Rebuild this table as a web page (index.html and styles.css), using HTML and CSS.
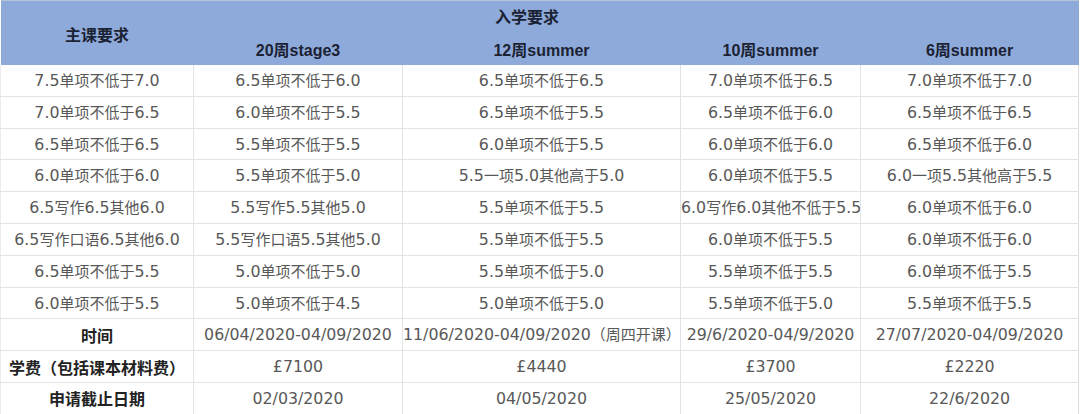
FILE: index.html
```html
<!DOCTYPE html>
<html lang="zh">
<head>
<meta charset="utf-8">
<title>入学要求</title>
<link rel="stylesheet" href="styles.css">
</head>
<body>
<table class="req">
  <colgroup>
    <col class="c1"><col class="c2"><col class="c3"><col class="c4"><col class="c5">
  </colgroup>
  <thead>
    <tr class="h1">
      <th rowspan="2" class="main">主课要求</th>
      <th colspan="3" class="top">入学要求</th>
      <th class="top"></th>
    </tr>
    <tr class="h2">
      <th>20周stage3</th>
      <th>12周summer</th>
      <th>10周summer</th>
      <th>6周summer</th>
    </tr>
  </thead>
  <tbody>
    <tr>
      <td><span class="n">7.5</span>单项不低于<span class="n">7.0</span></td>
      <td><span class="n">6.5</span>单项不低于<span class="n">6.0</span></td>
      <td><span class="n">6.5</span>单项不低于<span class="n">6.5</span></td>
      <td><span class="n">7.0</span>单项不低于<span class="n">6.5</span></td>
      <td><span class="n">7.0</span>单项不低于<span class="n">7.0</span></td>
    </tr>
    <tr>
      <td><span class="n">7.0</span>单项不低于<span class="n">6.5</span></td>
      <td><span class="n">6.0</span>单项不低于<span class="n">5.5</span></td>
      <td><span class="n">6.5</span>单项不低于<span class="n">5.5</span></td>
      <td><span class="n">6.5</span>单项不低于<span class="n">6.0</span></td>
      <td><span class="n">6.5</span>单项不低于<span class="n">6.5</span></td>
    </tr>
    <tr>
      <td><span class="n">6.5</span>单项不低于<span class="n">6.5</span></td>
      <td><span class="n">5.5</span>单项不低于<span class="n">5.5</span></td>
      <td><span class="n">6.0</span>单项不低于<span class="n">5.5</span></td>
      <td><span class="n">6.0</span>单项不低于<span class="n">6.0</span></td>
      <td><span class="n">6.5</span>单项不低于<span class="n">6.0</span></td>
    </tr>
    <tr>
      <td><span class="n">6.0</span>单项不低于<span class="n">6.0</span></td>
      <td><span class="n">5.5</span>单项不低于<span class="n">5.0</span></td>
      <td><span class="n">5.5</span>一项<span class="n">5.0</span>其他高于<span class="n">5.0</span></td>
      <td><span class="n">6.0</span>单项不低于<span class="n">5.5</span></td>
      <td><span class="n">6.0</span>一项<span class="n">5.5</span>其他高于<span class="n">5.5</span></td>
    </tr>
    <tr>
      <td><span class="n">6.5</span>写作<span class="n">6.5</span>其他<span class="n">6.0</span></td>
      <td><span class="n">5.5</span>写作<span class="n">5.5</span>其他<span class="n">5.0</span></td>
      <td><span class="n">5.5</span>单项不低于<span class="n">5.5</span></td>
      <td class="tight"><span class="n">6.0</span>写作<span class="n">6.0</span>其他不低于<span class="n">5.5</span></td>
      <td><span class="n">6.0</span>单项不低于<span class="n">6.0</span></td>
    </tr>
    <tr>
      <td><span class="n">6.5</span>写作口语<span class="n">6.5</span>其他<span class="n">6.0</span></td>
      <td><span class="n">5.5</span>写作口语<span class="n">5.5</span>其他<span class="n">5.0</span></td>
      <td><span class="n">5.5</span>单项不低于<span class="n">5.5</span></td>
      <td><span class="n">6.0</span>单项不低于<span class="n">5.5</span></td>
      <td><span class="n">6.0</span>单项不低于<span class="n">6.0</span></td>
    </tr>
    <tr>
      <td><span class="n">6.5</span>单项不低于<span class="n">5.5</span></td>
      <td><span class="n">5.0</span>单项不低于<span class="n">5.0</span></td>
      <td><span class="n">5.5</span>单项不低于<span class="n">5.0</span></td>
      <td><span class="n">5.5</span>单项不低于<span class="n">5.5</span></td>
      <td><span class="n">6.0</span>单项不低于<span class="n">5.5</span></td>
    </tr>
    <tr>
      <td><span class="n">6.0</span>单项不低于<span class="n">5.5</span></td>
      <td><span class="n">5.0</span>单项不低于<span class="n">4.5</span></td>
      <td><span class="n">5.0</span>单项不低于<span class="n">5.0</span></td>
      <td><span class="n">5.5</span>单项不低于<span class="n">5.0</span></td>
      <td><span class="n">5.5</span>单项不低于<span class="n">5.5</span></td>
    </tr>
    <tr>
      <td class="label">时间</td>
      <td><span class="n">06/04/2020-04/09/2020</span></td>
      <td><span class="n">11/06/2020-04/09/2020</span>（周四开课）</td>
      <td><span class="n">29/6/2020-04/9/2020</span></td>
      <td><span class="n">27/07/2020-04/09/2020</span></td>
    </tr>
    <tr>
      <td class="label">学费（包括课本材料费）</td>
      <td><span class="n">£7100</span></td>
      <td><span class="n">£4440</span></td>
      <td><span class="n">£3700</span></td>
      <td><span class="n">£2220</span></td>
    </tr>
    <tr>
      <td class="label">申请截止日期</td>
      <td><span class="n">02/03/2020</span></td>
      <td><span class="n">04/05/2020</span></td>
      <td><span class="n">25/05/2020</span></td>
      <td><span class="n">22/6/2020</span></td>
    </tr>
  </tbody>
</table>
</body>
</html>
```
FILE: styles.css
```css
html, body {
  margin: 0;
  padding: 0;
  background: #ffffff;
}

.req {
  width: 1078px;
  table-layout: fixed;
  border-collapse: collapse;
  font-family: "Noto Sans CJK SC", sans-serif;
  font-size: 15px;
  color: #585858;
}

.c1 { width: 193px; }
.c2 { width: 209px; }
.c3 { width: 278px; }
.c4 { width: 180px; }
.c5 { width: 218px; }

.req thead th {
  background: #8eaadb;
  color: #1b2233;
  font-family: "Liberation Sans", "Noto Sans CJK SC", sans-serif;
  font-size: 16px;
  font-weight: bold;
  padding: 0;
  text-align: center;
  white-space: nowrap;
  line-height: 1;
}

.req thead tr.h1 th {
  height: 30px;
  padding-top: 2px;
  border-top: 1px solid #b7c3d8;
  vertical-align: middle;
}

.req thead tr.h2 th {
  height: 28px;
  padding-top: 4px;
  vertical-align: middle;
}

.req thead tr.h1 th.main {
  padding-top: 6px;
}

.req tbody td {
  height: 30.8px;
  padding: 0;
  text-align: center;
  vertical-align: middle;
  white-space: nowrap;
  overflow: hidden;
  border: 1px solid #e3e3e3;
  line-height: 1;
}

.req tbody td:first-child {
  border-left: 1px solid #ececec;
}

.req tbody td:last-child {
  border-right: 1px solid #dcdcdc;
}

.req tbody tr:first-child td {
  border-top: none;
}

.n {
  font-family: "DejaVu Sans", sans-serif;
  font-size: 15.8px;
}

.req tbody td.label {
  font-family: "Noto Sans CJK SC", sans-serif;
  font-size: 16px;
  font-weight: bold;
  color: #222222;
}

.req tbody td.tight {
  text-overflow: clip;
}
```
